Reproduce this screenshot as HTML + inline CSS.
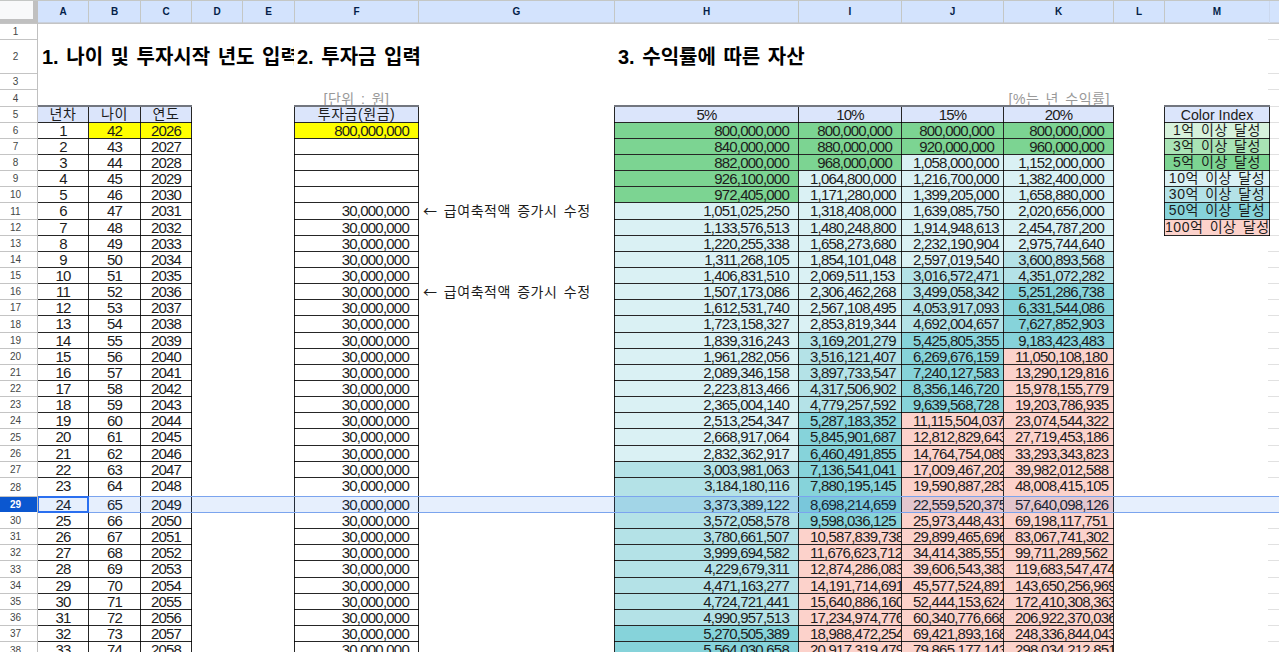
<!DOCTYPE html>
<html lang="ko"><head><meta charset="utf-8"><title>sheet</title>
<style>
html,body{margin:0;padding:0;background:#fff;}
body{width:1279px;height:652px;overflow:hidden;position:relative;
 font-family:"Liberation Sans","Noto Sans CJK KR",sans-serif;color:#000;}
#s{position:absolute;left:0;top:0;width:1279px;height:652px;overflow:hidden;background:#fff;}
#s div{position:absolute;box-sizing:border-box;}
.c{overflow:hidden;white-space:nowrap;font-size:15px;line-height:16px;letter-spacing:-0.78px;color:#1c1c1c;}
.c span{display:inline-block;min-width:100%;box-sizing:border-box;}
.r span{text-align:right;padding-right:9px;padding-left:11px;}
.m span{text-align:center;}
.rn span{text-align:right;}
.k{letter-spacing:0.55px;word-spacing:1.8px;font-size:14px;line-height:14px;}
.c i{font-style:normal;font-family:"Noto Sans CJK KR",sans-serif;}
.vl,.hl{background:rgba(0,0,0,0.85);}
.gl{background:#e1e1e1;}
.ch{background:#d3e3fd;color:#041e49;font-weight:bold;font-size:10px;line-height:22px;text-align:center;top:1px;height:21px;}
.cs{background:#c4c7c5;top:1px;width:1px;height:22px;}
.rh{left:0;width:37px;padding-right:6px;background:#fff;color:#444746;font-size:10px;text-align:center;}
.rs{left:0;width:37px;height:1px;background:#c4c4c4;}
.t{font-size:20px;font-weight:bold;white-space:nowrap;overflow:hidden;line-height:34px;letter-spacing:0;word-spacing:2px;}
.g{color:#999;}
</style></head><body><div id="s">
<div class="gl" style="left:1268px;top:39px;width:11px;height:1px"></div>
<div class="gl" style="left:1268px;top:73px;width:11px;height:1px"></div>
<div class="gl" style="left:1268px;top:89px;width:11px;height:1px"></div>
<div class="gl" style="left:1268px;top:106px;width:11px;height:1px"></div>
<div class="gl" style="left:1268px;top:122px;width:11px;height:1px"></div>
<div class="gl" style="left:1268px;top:138px;width:11px;height:1px"></div>
<div class="gl" style="left:1268px;top:154px;width:11px;height:1px"></div>
<div class="gl" style="left:1268px;top:170px;width:11px;height:1px"></div>
<div class="gl" style="left:1268px;top:186px;width:11px;height:1px"></div>
<div class="gl" style="left:1268px;top:202px;width:11px;height:1px"></div>
<div class="gl" style="left:1268px;top:219px;width:11px;height:1px"></div>
<div class="gl" style="left:1268px;top:235px;width:11px;height:1px"></div>
<div class="gl" style="left:1268px;top:251px;width:11px;height:1px"></div>
<div class="gl" style="left:1268px;top:267px;width:11px;height:1px"></div>
<div class="gl" style="left:1268px;top:283px;width:11px;height:1px"></div>
<div class="gl" style="left:1268px;top:299px;width:11px;height:1px"></div>
<div class="gl" style="left:1268px;top:315px;width:11px;height:1px"></div>
<div class="gl" style="left:1268px;top:332px;width:11px;height:1px"></div>
<div class="gl" style="left:1268px;top:348px;width:11px;height:1px"></div>
<div class="gl" style="left:1268px;top:364px;width:11px;height:1px"></div>
<div class="gl" style="left:1268px;top:380px;width:11px;height:1px"></div>
<div class="gl" style="left:1268px;top:396px;width:11px;height:1px"></div>
<div class="gl" style="left:1268px;top:412px;width:11px;height:1px"></div>
<div class="gl" style="left:1268px;top:428px;width:11px;height:1px"></div>
<div class="gl" style="left:1268px;top:445px;width:11px;height:1px"></div>
<div class="gl" style="left:1268px;top:461px;width:11px;height:1px"></div>
<div class="gl" style="left:1268px;top:477px;width:11px;height:1px"></div>
<div class="gl" style="left:1268px;top:496px;width:11px;height:1px"></div>
<div class="gl" style="left:1268px;top:512px;width:11px;height:1px"></div>
<div class="gl" style="left:1268px;top:528px;width:11px;height:1px"></div>
<div class="gl" style="left:1268px;top:544px;width:11px;height:1px"></div>
<div class="gl" style="left:1268px;top:560px;width:11px;height:1px"></div>
<div class="gl" style="left:1268px;top:577px;width:11px;height:1px"></div>
<div class="gl" style="left:1268px;top:593px;width:11px;height:1px"></div>
<div class="gl" style="left:1268px;top:609px;width:11px;height:1px"></div>
<div class="gl" style="left:1268px;top:625px;width:11px;height:1px"></div>
<div class="gl" style="left:1268px;top:641px;width:11px;height:1px"></div>
<div class="t" style="left:38px;top:40px;width:256px;height:33px;padding-left:4px">1. 나이 및 투자시작 년도 입력</div>
<div class="t" style="left:295px;top:40px;width:200px;height:33px;padding-left:2px">2. 투자금 입력</div>
<div class="t" style="left:615px;top:40px;width:400px;height:33px;padding-left:3px">3. 수익률에 따른 자산</div>
<div class="c m k g" style="left:295px;top:90px;width:123px;height:16px;padding-top:2px;"><span>[단위 : 원]</span></div>
<div class="c rn k g" style="left:1004px;top:90px;width:106px;height:16px;padding-top:2px;"><span>[%는 년 수익률]</span></div>
<div class="c m k" style="left:38px;top:107px;width:50px;height:15px;background:#dbe5fb;"><span>년차</span></div>
<div class="c m k" style="left:89px;top:107px;width:51px;height:15px;background:#dbe5fb;"><span>나이</span></div>
<div class="c m k" style="left:141px;top:107px;width:50px;height:15px;background:#dbe5fb;"><span>연도</span></div>
<div class="c m k" style="left:295px;top:107px;width:123px;height:15px;background:#dbe5fb;"><span>투자금(원금)</span></div>
<div class="c m" style="left:615px;top:107px;width:183px;height:15px;background:#dbe5fb;"><span>5%</span></div>
<div class="c m" style="left:799px;top:107px;width:102px;height:15px;background:#dbe5fb;"><span>10%</span></div>
<div class="c m" style="left:902px;top:107px;width:101px;height:15px;background:#dbe5fb;"><span>15%</span></div>
<div class="c m" style="left:1004px;top:107px;width:109px;height:15px;background:#dbe5fb;"><span>20%</span></div>
<div class="c m" style="left:1165px;top:107px;width:104px;height:15px;background:#dbe5fb;letter-spacing:0;font-size:14.2px;"><span>Color Index</span></div>
<div class="c m k" style="left:1165px;top:123px;width:104px;height:15px;background:#d7f2dc;"><span>1억 이상 달성</span></div>
<div class="c m k" style="left:1165px;top:139px;width:104px;height:15px;background:#a9e3b5;"><span>3억 이상 달성</span></div>
<div class="c m k" style="left:1165px;top:155px;width:104px;height:15px;background:#7cd492;"><span>5억 이상 달성</span></div>
<div class="c m k" style="left:1165px;top:171px;width:104px;height:15px;background:#daf1f4;"><span>10억 이상 달성</span></div>
<div class="c m k" style="left:1165px;top:187px;width:104px;height:15px;background:#b4e2e7;"><span>30억 이상 달성</span></div>
<div class="c m k" style="left:1165px;top:203px;width:104px;height:16px;background:#86d3da;"><span>50억 이상 달성</span></div>
<div class="c m k" style="left:1165px;top:220px;width:104px;height:15px;background:#fcd2cb;"><span>100억 이상 달성</span></div>
<div class="c m" style="left:38px;top:123px;width:50px;height:15px;"><span>1</span></div>
<div class="c m" style="left:89px;top:123px;width:51px;height:15px;background:#ffff00;"><span>42</span></div>
<div class="c m" style="left:141px;top:123px;width:50px;height:15px;background:#ffff00;"><span>2026</span></div>
<div class="c r" style="left:295px;top:123px;width:123px;height:15px;background:#ffff00;"><span>800,000,000</span></div>
<div class="c r" style="left:615px;top:123px;width:183px;height:15px;background:#7cd492;"><span>800,000,000</span></div>
<div class="c r" style="left:799px;top:123px;width:102px;height:15px;background:#7cd492;"><span>800,000,000</span></div>
<div class="c r" style="left:902px;top:123px;width:101px;height:15px;background:#7cd492;"><span>800,000,000</span></div>
<div class="c r" style="left:1004px;top:123px;width:109px;height:15px;background:#7cd492;"><span>800,000,000</span></div>
<div class="c m" style="left:38px;top:139px;width:50px;height:15px;"><span>2</span></div>
<div class="c m" style="left:89px;top:139px;width:51px;height:15px;"><span>43</span></div>
<div class="c m" style="left:141px;top:139px;width:50px;height:15px;"><span>2027</span></div>
<div class="c r" style="left:295px;top:139px;width:123px;height:15px;"><span></span></div>
<div class="c r" style="left:615px;top:139px;width:183px;height:15px;background:#7cd492;"><span>840,000,000</span></div>
<div class="c r" style="left:799px;top:139px;width:102px;height:15px;background:#7cd492;"><span>880,000,000</span></div>
<div class="c r" style="left:902px;top:139px;width:101px;height:15px;background:#7cd492;"><span>920,000,000</span></div>
<div class="c r" style="left:1004px;top:139px;width:109px;height:15px;background:#7cd492;"><span>960,000,000</span></div>
<div class="c m" style="left:38px;top:155px;width:50px;height:15px;"><span>3</span></div>
<div class="c m" style="left:89px;top:155px;width:51px;height:15px;"><span>44</span></div>
<div class="c m" style="left:141px;top:155px;width:50px;height:15px;"><span>2028</span></div>
<div class="c r" style="left:295px;top:155px;width:123px;height:15px;"><span></span></div>
<div class="c r" style="left:615px;top:155px;width:183px;height:15px;background:#7cd492;"><span>882,000,000</span></div>
<div class="c r" style="left:799px;top:155px;width:102px;height:15px;background:#7cd492;"><span>968,000,000</span></div>
<div class="c r" style="left:902px;top:155px;width:101px;height:15px;background:#daf1f4;"><span>1,058,000,000</span></div>
<div class="c r" style="left:1004px;top:155px;width:109px;height:15px;background:#daf1f4;"><span>1,152,000,000</span></div>
<div class="c m" style="left:38px;top:171px;width:50px;height:15px;"><span>4</span></div>
<div class="c m" style="left:89px;top:171px;width:51px;height:15px;"><span>45</span></div>
<div class="c m" style="left:141px;top:171px;width:50px;height:15px;"><span>2029</span></div>
<div class="c r" style="left:295px;top:171px;width:123px;height:15px;"><span></span></div>
<div class="c r" style="left:615px;top:171px;width:183px;height:15px;background:#7cd492;"><span>926,100,000</span></div>
<div class="c r" style="left:799px;top:171px;width:102px;height:15px;background:#daf1f4;"><span>1,064,800,000</span></div>
<div class="c r" style="left:902px;top:171px;width:101px;height:15px;background:#daf1f4;"><span>1,216,700,000</span></div>
<div class="c r" style="left:1004px;top:171px;width:109px;height:15px;background:#daf1f4;"><span>1,382,400,000</span></div>
<div class="c m" style="left:38px;top:187px;width:50px;height:15px;"><span>5</span></div>
<div class="c m" style="left:89px;top:187px;width:51px;height:15px;"><span>46</span></div>
<div class="c m" style="left:141px;top:187px;width:50px;height:15px;"><span>2030</span></div>
<div class="c r" style="left:295px;top:187px;width:123px;height:15px;"><span></span></div>
<div class="c r" style="left:615px;top:187px;width:183px;height:15px;background:#7cd492;"><span>972,405,000</span></div>
<div class="c r" style="left:799px;top:187px;width:102px;height:15px;background:#daf1f4;"><span>1,171,280,000</span></div>
<div class="c r" style="left:902px;top:187px;width:101px;height:15px;background:#daf1f4;"><span>1,399,205,000</span></div>
<div class="c r" style="left:1004px;top:187px;width:109px;height:15px;background:#daf1f4;"><span>1,658,880,000</span></div>
<div class="c m" style="left:38px;top:203px;width:50px;height:16px;"><span>6</span></div>
<div class="c m" style="left:89px;top:203px;width:51px;height:16px;"><span>47</span></div>
<div class="c m" style="left:141px;top:203px;width:50px;height:16px;"><span>2031</span></div>
<div class="c r" style="left:295px;top:203px;width:123px;height:16px;"><span>30,000,000</span></div>
<div class="c r" style="left:615px;top:203px;width:183px;height:16px;background:#daf1f4;"><span>1,051,025,250</span></div>
<div class="c r" style="left:799px;top:203px;width:102px;height:16px;background:#daf1f4;"><span>1,318,408,000</span></div>
<div class="c r" style="left:902px;top:203px;width:101px;height:16px;background:#daf1f4;"><span>1,639,085,750</span></div>
<div class="c r" style="left:1004px;top:203px;width:109px;height:16px;background:#daf1f4;"><span>2,020,656,000</span></div>
<div class="c k" style="left:419px;top:203px;width:195px;height:16px;padding-left:4px;"><span><i>←</i> 급여축적액 증가시 수정</span></div>
<div class="c m" style="left:38px;top:220px;width:50px;height:15px;"><span>7</span></div>
<div class="c m" style="left:89px;top:220px;width:51px;height:15px;"><span>48</span></div>
<div class="c m" style="left:141px;top:220px;width:50px;height:15px;"><span>2032</span></div>
<div class="c r" style="left:295px;top:220px;width:123px;height:15px;"><span>30,000,000</span></div>
<div class="c r" style="left:615px;top:220px;width:183px;height:15px;background:#daf1f4;"><span>1,133,576,513</span></div>
<div class="c r" style="left:799px;top:220px;width:102px;height:15px;background:#daf1f4;"><span>1,480,248,800</span></div>
<div class="c r" style="left:902px;top:220px;width:101px;height:15px;background:#daf1f4;"><span>1,914,948,613</span></div>
<div class="c r" style="left:1004px;top:220px;width:109px;height:15px;background:#daf1f4;"><span>2,454,787,200</span></div>
<div class="c m" style="left:38px;top:236px;width:50px;height:15px;"><span>8</span></div>
<div class="c m" style="left:89px;top:236px;width:51px;height:15px;"><span>49</span></div>
<div class="c m" style="left:141px;top:236px;width:50px;height:15px;"><span>2033</span></div>
<div class="c r" style="left:295px;top:236px;width:123px;height:15px;"><span>30,000,000</span></div>
<div class="c r" style="left:615px;top:236px;width:183px;height:15px;background:#daf1f4;"><span>1,220,255,338</span></div>
<div class="c r" style="left:799px;top:236px;width:102px;height:15px;background:#daf1f4;"><span>1,658,273,680</span></div>
<div class="c r" style="left:902px;top:236px;width:101px;height:15px;background:#daf1f4;"><span>2,232,190,904</span></div>
<div class="c r" style="left:1004px;top:236px;width:109px;height:15px;background:#daf1f4;"><span>2,975,744,640</span></div>
<div class="c m" style="left:38px;top:252px;width:50px;height:15px;"><span>9</span></div>
<div class="c m" style="left:89px;top:252px;width:51px;height:15px;"><span>50</span></div>
<div class="c m" style="left:141px;top:252px;width:50px;height:15px;"><span>2034</span></div>
<div class="c r" style="left:295px;top:252px;width:123px;height:15px;"><span>30,000,000</span></div>
<div class="c r" style="left:615px;top:252px;width:183px;height:15px;background:#daf1f4;"><span>1,311,268,105</span></div>
<div class="c r" style="left:799px;top:252px;width:102px;height:15px;background:#daf1f4;"><span>1,854,101,048</span></div>
<div class="c r" style="left:902px;top:252px;width:101px;height:15px;background:#daf1f4;"><span>2,597,019,540</span></div>
<div class="c r" style="left:1004px;top:252px;width:109px;height:15px;background:#b4e2e7;"><span>3,600,893,568</span></div>
<div class="c m" style="left:38px;top:268px;width:50px;height:15px;"><span>10</span></div>
<div class="c m" style="left:89px;top:268px;width:51px;height:15px;"><span>51</span></div>
<div class="c m" style="left:141px;top:268px;width:50px;height:15px;"><span>2035</span></div>
<div class="c r" style="left:295px;top:268px;width:123px;height:15px;"><span>30,000,000</span></div>
<div class="c r" style="left:615px;top:268px;width:183px;height:15px;background:#daf1f4;"><span>1,406,831,510</span></div>
<div class="c r" style="left:799px;top:268px;width:102px;height:15px;background:#daf1f4;"><span>2,069,511,153</span></div>
<div class="c r" style="left:902px;top:268px;width:101px;height:15px;background:#b4e2e7;"><span>3,016,572,471</span></div>
<div class="c r" style="left:1004px;top:268px;width:109px;height:15px;background:#b4e2e7;"><span>4,351,072,282</span></div>
<div class="c m" style="left:38px;top:284px;width:50px;height:15px;"><span>11</span></div>
<div class="c m" style="left:89px;top:284px;width:51px;height:15px;"><span>52</span></div>
<div class="c m" style="left:141px;top:284px;width:50px;height:15px;"><span>2036</span></div>
<div class="c r" style="left:295px;top:284px;width:123px;height:15px;"><span>30,000,000</span></div>
<div class="c r" style="left:615px;top:284px;width:183px;height:15px;background:#daf1f4;"><span>1,507,173,086</span></div>
<div class="c r" style="left:799px;top:284px;width:102px;height:15px;background:#daf1f4;"><span>2,306,462,268</span></div>
<div class="c r" style="left:902px;top:284px;width:101px;height:15px;background:#b4e2e7;"><span>3,499,058,342</span></div>
<div class="c r" style="left:1004px;top:284px;width:109px;height:15px;background:#86d3da;"><span>5,251,286,738</span></div>
<div class="c k" style="left:419px;top:284px;width:195px;height:15px;padding-left:4px;"><span><i>←</i> 급여축적액 증가시 수정</span></div>
<div class="c m" style="left:38px;top:300px;width:50px;height:15px;"><span>12</span></div>
<div class="c m" style="left:89px;top:300px;width:51px;height:15px;"><span>53</span></div>
<div class="c m" style="left:141px;top:300px;width:50px;height:15px;"><span>2037</span></div>
<div class="c r" style="left:295px;top:300px;width:123px;height:15px;"><span>30,000,000</span></div>
<div class="c r" style="left:615px;top:300px;width:183px;height:15px;background:#daf1f4;"><span>1,612,531,740</span></div>
<div class="c r" style="left:799px;top:300px;width:102px;height:15px;background:#daf1f4;"><span>2,567,108,495</span></div>
<div class="c r" style="left:902px;top:300px;width:101px;height:15px;background:#b4e2e7;"><span>4,053,917,093</span></div>
<div class="c r" style="left:1004px;top:300px;width:109px;height:15px;background:#86d3da;"><span>6,331,544,086</span></div>
<div class="c m" style="left:38px;top:316px;width:50px;height:16px;"><span>13</span></div>
<div class="c m" style="left:89px;top:316px;width:51px;height:16px;"><span>54</span></div>
<div class="c m" style="left:141px;top:316px;width:50px;height:16px;"><span>2038</span></div>
<div class="c r" style="left:295px;top:316px;width:123px;height:16px;"><span>30,000,000</span></div>
<div class="c r" style="left:615px;top:316px;width:183px;height:16px;background:#daf1f4;"><span>1,723,158,327</span></div>
<div class="c r" style="left:799px;top:316px;width:102px;height:16px;background:#daf1f4;"><span>2,853,819,344</span></div>
<div class="c r" style="left:902px;top:316px;width:101px;height:16px;background:#b4e2e7;"><span>4,692,004,657</span></div>
<div class="c r" style="left:1004px;top:316px;width:109px;height:16px;background:#86d3da;"><span>7,627,852,903</span></div>
<div class="c m" style="left:38px;top:333px;width:50px;height:15px;"><span>14</span></div>
<div class="c m" style="left:89px;top:333px;width:51px;height:15px;"><span>55</span></div>
<div class="c m" style="left:141px;top:333px;width:50px;height:15px;"><span>2039</span></div>
<div class="c r" style="left:295px;top:333px;width:123px;height:15px;"><span>30,000,000</span></div>
<div class="c r" style="left:615px;top:333px;width:183px;height:15px;background:#daf1f4;"><span>1,839,316,243</span></div>
<div class="c r" style="left:799px;top:333px;width:102px;height:15px;background:#b4e2e7;"><span>3,169,201,279</span></div>
<div class="c r" style="left:902px;top:333px;width:101px;height:15px;background:#86d3da;"><span>5,425,805,355</span></div>
<div class="c r" style="left:1004px;top:333px;width:109px;height:15px;background:#86d3da;"><span>9,183,423,483</span></div>
<div class="c m" style="left:38px;top:349px;width:50px;height:15px;"><span>15</span></div>
<div class="c m" style="left:89px;top:349px;width:51px;height:15px;"><span>56</span></div>
<div class="c m" style="left:141px;top:349px;width:50px;height:15px;"><span>2040</span></div>
<div class="c r" style="left:295px;top:349px;width:123px;height:15px;"><span>30,000,000</span></div>
<div class="c r" style="left:615px;top:349px;width:183px;height:15px;background:#daf1f4;"><span>1,961,282,056</span></div>
<div class="c r" style="left:799px;top:349px;width:102px;height:15px;background:#b4e2e7;"><span>3,516,121,407</span></div>
<div class="c r" style="left:902px;top:349px;width:101px;height:15px;background:#86d3da;"><span>6,269,676,159</span></div>
<div class="c r" style="left:1004px;top:349px;width:109px;height:15px;background:#fcd2cb;"><span>11,050,108,180</span></div>
<div class="c m" style="left:38px;top:365px;width:50px;height:15px;"><span>16</span></div>
<div class="c m" style="left:89px;top:365px;width:51px;height:15px;"><span>57</span></div>
<div class="c m" style="left:141px;top:365px;width:50px;height:15px;"><span>2041</span></div>
<div class="c r" style="left:295px;top:365px;width:123px;height:15px;"><span>30,000,000</span></div>
<div class="c r" style="left:615px;top:365px;width:183px;height:15px;background:#daf1f4;"><span>2,089,346,158</span></div>
<div class="c r" style="left:799px;top:365px;width:102px;height:15px;background:#b4e2e7;"><span>3,897,733,547</span></div>
<div class="c r" style="left:902px;top:365px;width:101px;height:15px;background:#86d3da;"><span>7,240,127,583</span></div>
<div class="c r" style="left:1004px;top:365px;width:109px;height:15px;background:#fcd2cb;"><span>13,290,129,816</span></div>
<div class="c m" style="left:38px;top:381px;width:50px;height:15px;"><span>17</span></div>
<div class="c m" style="left:89px;top:381px;width:51px;height:15px;"><span>58</span></div>
<div class="c m" style="left:141px;top:381px;width:50px;height:15px;"><span>2042</span></div>
<div class="c r" style="left:295px;top:381px;width:123px;height:15px;"><span>30,000,000</span></div>
<div class="c r" style="left:615px;top:381px;width:183px;height:15px;background:#daf1f4;"><span>2,223,813,466</span></div>
<div class="c r" style="left:799px;top:381px;width:102px;height:15px;background:#b4e2e7;"><span>4,317,506,902</span></div>
<div class="c r" style="left:902px;top:381px;width:101px;height:15px;background:#86d3da;"><span>8,356,146,720</span></div>
<div class="c r" style="left:1004px;top:381px;width:109px;height:15px;background:#fcd2cb;"><span>15,978,155,779</span></div>
<div class="c m" style="left:38px;top:397px;width:50px;height:15px;"><span>18</span></div>
<div class="c m" style="left:89px;top:397px;width:51px;height:15px;"><span>59</span></div>
<div class="c m" style="left:141px;top:397px;width:50px;height:15px;"><span>2043</span></div>
<div class="c r" style="left:295px;top:397px;width:123px;height:15px;"><span>30,000,000</span></div>
<div class="c r" style="left:615px;top:397px;width:183px;height:15px;background:#daf1f4;"><span>2,365,004,140</span></div>
<div class="c r" style="left:799px;top:397px;width:102px;height:15px;background:#b4e2e7;"><span>4,779,257,592</span></div>
<div class="c r" style="left:902px;top:397px;width:101px;height:15px;background:#86d3da;"><span>9,639,568,728</span></div>
<div class="c r" style="left:1004px;top:397px;width:109px;height:15px;background:#fcd2cb;"><span>19,203,786,935</span></div>
<div class="c m" style="left:38px;top:413px;width:50px;height:15px;"><span>19</span></div>
<div class="c m" style="left:89px;top:413px;width:51px;height:15px;"><span>60</span></div>
<div class="c m" style="left:141px;top:413px;width:50px;height:15px;"><span>2044</span></div>
<div class="c r" style="left:295px;top:413px;width:123px;height:15px;"><span>30,000,000</span></div>
<div class="c r" style="left:615px;top:413px;width:183px;height:15px;background:#daf1f4;"><span>2,513,254,347</span></div>
<div class="c r" style="left:799px;top:413px;width:102px;height:15px;background:#86d3da;"><span>5,287,183,352</span></div>
<div class="c r" style="left:902px;top:413px;width:101px;height:15px;background:#fcd2cb;"><span>11,115,504,037</span></div>
<div class="c r" style="left:1004px;top:413px;width:109px;height:15px;background:#fcd2cb;"><span>23,074,544,322</span></div>
<div class="c m" style="left:38px;top:429px;width:50px;height:16px;"><span>20</span></div>
<div class="c m" style="left:89px;top:429px;width:51px;height:16px;"><span>61</span></div>
<div class="c m" style="left:141px;top:429px;width:50px;height:16px;"><span>2045</span></div>
<div class="c r" style="left:295px;top:429px;width:123px;height:16px;"><span>30,000,000</span></div>
<div class="c r" style="left:615px;top:429px;width:183px;height:16px;background:#daf1f4;"><span>2,668,917,064</span></div>
<div class="c r" style="left:799px;top:429px;width:102px;height:16px;background:#86d3da;"><span>5,845,901,687</span></div>
<div class="c r" style="left:902px;top:429px;width:101px;height:16px;background:#fcd2cb;"><span>12,812,829,643</span></div>
<div class="c r" style="left:1004px;top:429px;width:109px;height:16px;background:#fcd2cb;"><span>27,719,453,186</span></div>
<div class="c m" style="left:38px;top:446px;width:50px;height:15px;"><span>21</span></div>
<div class="c m" style="left:89px;top:446px;width:51px;height:15px;"><span>62</span></div>
<div class="c m" style="left:141px;top:446px;width:50px;height:15px;"><span>2046</span></div>
<div class="c r" style="left:295px;top:446px;width:123px;height:15px;"><span>30,000,000</span></div>
<div class="c r" style="left:615px;top:446px;width:183px;height:15px;background:#daf1f4;"><span>2,832,362,917</span></div>
<div class="c r" style="left:799px;top:446px;width:102px;height:15px;background:#86d3da;"><span>6,460,491,855</span></div>
<div class="c r" style="left:902px;top:446px;width:101px;height:15px;background:#fcd2cb;"><span>14,764,754,089</span></div>
<div class="c r" style="left:1004px;top:446px;width:109px;height:15px;background:#fcd2cb;"><span>33,293,343,823</span></div>
<div class="c m" style="left:38px;top:462px;width:50px;height:15px;"><span>22</span></div>
<div class="c m" style="left:89px;top:462px;width:51px;height:15px;"><span>63</span></div>
<div class="c m" style="left:141px;top:462px;width:50px;height:15px;"><span>2047</span></div>
<div class="c r" style="left:295px;top:462px;width:123px;height:15px;"><span>30,000,000</span></div>
<div class="c r" style="left:615px;top:462px;width:183px;height:15px;background:#b4e2e7;"><span>3,003,981,063</span></div>
<div class="c r" style="left:799px;top:462px;width:102px;height:15px;background:#86d3da;"><span>7,136,541,041</span></div>
<div class="c r" style="left:902px;top:462px;width:101px;height:15px;background:#fcd2cb;"><span>17,009,467,202</span></div>
<div class="c r" style="left:1004px;top:462px;width:109px;height:15px;background:#fcd2cb;"><span>39,982,012,588</span></div>
<div class="c m" style="left:38px;top:478px;width:50px;height:18px;"><span>23</span></div>
<div class="c m" style="left:89px;top:478px;width:51px;height:18px;"><span>64</span></div>
<div class="c m" style="left:141px;top:478px;width:50px;height:18px;"><span>2048</span></div>
<div class="c r" style="left:295px;top:478px;width:123px;height:18px;"><span>30,000,000</span></div>
<div class="c r" style="left:615px;top:478px;width:183px;height:18px;background:#b4e2e7;"><span>3,184,180,116</span></div>
<div class="c r" style="left:799px;top:478px;width:102px;height:18px;background:#86d3da;"><span>7,880,195,145</span></div>
<div class="c r" style="left:902px;top:478px;width:101px;height:18px;background:#fcd2cb;"><span>19,590,887,283</span></div>
<div class="c r" style="left:1004px;top:478px;width:109px;height:18px;background:#fcd2cb;"><span>48,008,415,105</span></div>
<div class="c m" style="left:38px;top:497px;width:50px;height:15px;"><span>24</span></div>
<div class="c m" style="left:89px;top:497px;width:51px;height:15px;"><span>65</span></div>
<div class="c m" style="left:141px;top:497px;width:50px;height:15px;"><span>2049</span></div>
<div class="c r" style="left:295px;top:497px;width:123px;height:15px;"><span>30,000,000</span></div>
<div class="c r" style="left:615px;top:497px;width:183px;height:15px;background:#b4e2e7;"><span>3,373,389,122</span></div>
<div class="c r" style="left:799px;top:497px;width:102px;height:15px;background:#86d3da;"><span>8,698,214,659</span></div>
<div class="c r" style="left:902px;top:497px;width:101px;height:15px;background:#fcd2cb;"><span>22,559,520,375</span></div>
<div class="c r" style="left:1004px;top:497px;width:109px;height:15px;background:#fcd2cb;"><span>57,640,098,126</span></div>
<div class="c m" style="left:38px;top:513px;width:50px;height:15px;"><span>25</span></div>
<div class="c m" style="left:89px;top:513px;width:51px;height:15px;"><span>66</span></div>
<div class="c m" style="left:141px;top:513px;width:50px;height:15px;"><span>2050</span></div>
<div class="c r" style="left:295px;top:513px;width:123px;height:15px;"><span>30,000,000</span></div>
<div class="c r" style="left:615px;top:513px;width:183px;height:15px;background:#b4e2e7;"><span>3,572,058,578</span></div>
<div class="c r" style="left:799px;top:513px;width:102px;height:15px;background:#86d3da;"><span>9,598,036,125</span></div>
<div class="c r" style="left:902px;top:513px;width:101px;height:15px;background:#fcd2cb;"><span>25,973,448,431</span></div>
<div class="c r" style="left:1004px;top:513px;width:109px;height:15px;background:#fcd2cb;"><span>69,198,117,751</span></div>
<div class="c m" style="left:38px;top:529px;width:50px;height:15px;"><span>26</span></div>
<div class="c m" style="left:89px;top:529px;width:51px;height:15px;"><span>67</span></div>
<div class="c m" style="left:141px;top:529px;width:50px;height:15px;"><span>2051</span></div>
<div class="c r" style="left:295px;top:529px;width:123px;height:15px;"><span>30,000,000</span></div>
<div class="c r" style="left:615px;top:529px;width:183px;height:15px;background:#b4e2e7;"><span>3,780,661,507</span></div>
<div class="c r" style="left:799px;top:529px;width:102px;height:15px;background:#fcd2cb;"><span>10,587,839,738</span></div>
<div class="c r" style="left:902px;top:529px;width:101px;height:15px;background:#fcd2cb;"><span>29,899,465,696</span></div>
<div class="c r" style="left:1004px;top:529px;width:109px;height:15px;background:#fcd2cb;"><span>83,067,741,302</span></div>
<div class="c m" style="left:38px;top:545px;width:50px;height:15px;"><span>27</span></div>
<div class="c m" style="left:89px;top:545px;width:51px;height:15px;"><span>68</span></div>
<div class="c m" style="left:141px;top:545px;width:50px;height:15px;"><span>2052</span></div>
<div class="c r" style="left:295px;top:545px;width:123px;height:15px;"><span>30,000,000</span></div>
<div class="c r" style="left:615px;top:545px;width:183px;height:15px;background:#b4e2e7;"><span>3,999,694,582</span></div>
<div class="c r" style="left:799px;top:545px;width:102px;height:15px;background:#fcd2cb;"><span>11,676,623,712</span></div>
<div class="c r" style="left:902px;top:545px;width:101px;height:15px;background:#fcd2cb;"><span>34,414,385,551</span></div>
<div class="c r" style="left:1004px;top:545px;width:109px;height:15px;background:#fcd2cb;"><span>99,711,289,562</span></div>
<div class="c m" style="left:38px;top:561px;width:50px;height:16px;"><span>28</span></div>
<div class="c m" style="left:89px;top:561px;width:51px;height:16px;"><span>69</span></div>
<div class="c m" style="left:141px;top:561px;width:50px;height:16px;"><span>2053</span></div>
<div class="c r" style="left:295px;top:561px;width:123px;height:16px;"><span>30,000,000</span></div>
<div class="c r" style="left:615px;top:561px;width:183px;height:16px;background:#b4e2e7;"><span>4,229,679,311</span></div>
<div class="c r" style="left:799px;top:561px;width:102px;height:16px;background:#fcd2cb;"><span>12,874,286,083</span></div>
<div class="c r" style="left:902px;top:561px;width:101px;height:16px;background:#fcd2cb;"><span>39,606,543,383</span></div>
<div class="c r" style="left:1004px;top:561px;width:109px;height:16px;background:#fcd2cb;"><span>119,683,547,474</span></div>
<div class="c m" style="left:38px;top:578px;width:50px;height:15px;"><span>29</span></div>
<div class="c m" style="left:89px;top:578px;width:51px;height:15px;"><span>70</span></div>
<div class="c m" style="left:141px;top:578px;width:50px;height:15px;"><span>2054</span></div>
<div class="c r" style="left:295px;top:578px;width:123px;height:15px;"><span>30,000,000</span></div>
<div class="c r" style="left:615px;top:578px;width:183px;height:15px;background:#b4e2e7;"><span>4,471,163,277</span></div>
<div class="c r" style="left:799px;top:578px;width:102px;height:15px;background:#fcd2cb;"><span>14,191,714,691</span></div>
<div class="c r" style="left:902px;top:578px;width:101px;height:15px;background:#fcd2cb;"><span>45,577,524,891</span></div>
<div class="c r" style="left:1004px;top:578px;width:109px;height:15px;background:#fcd2cb;"><span>143,650,256,969</span></div>
<div class="c m" style="left:38px;top:594px;width:50px;height:15px;"><span>30</span></div>
<div class="c m" style="left:89px;top:594px;width:51px;height:15px;"><span>71</span></div>
<div class="c m" style="left:141px;top:594px;width:50px;height:15px;"><span>2055</span></div>
<div class="c r" style="left:295px;top:594px;width:123px;height:15px;"><span>30,000,000</span></div>
<div class="c r" style="left:615px;top:594px;width:183px;height:15px;background:#b4e2e7;"><span>4,724,721,441</span></div>
<div class="c r" style="left:799px;top:594px;width:102px;height:15px;background:#fcd2cb;"><span>15,640,886,160</span></div>
<div class="c r" style="left:902px;top:594px;width:101px;height:15px;background:#fcd2cb;"><span>52,444,153,624</span></div>
<div class="c r" style="left:1004px;top:594px;width:109px;height:15px;background:#fcd2cb;"><span>172,410,308,363</span></div>
<div class="c m" style="left:38px;top:610px;width:50px;height:15px;"><span>31</span></div>
<div class="c m" style="left:89px;top:610px;width:51px;height:15px;"><span>72</span></div>
<div class="c m" style="left:141px;top:610px;width:50px;height:15px;"><span>2056</span></div>
<div class="c r" style="left:295px;top:610px;width:123px;height:15px;"><span>30,000,000</span></div>
<div class="c r" style="left:615px;top:610px;width:183px;height:15px;background:#b4e2e7;"><span>4,990,957,513</span></div>
<div class="c r" style="left:799px;top:610px;width:102px;height:15px;background:#fcd2cb;"><span>17,234,974,776</span></div>
<div class="c r" style="left:902px;top:610px;width:101px;height:15px;background:#fcd2cb;"><span>60,340,776,668</span></div>
<div class="c r" style="left:1004px;top:610px;width:109px;height:15px;background:#fcd2cb;"><span>206,922,370,036</span></div>
<div class="c m" style="left:38px;top:626px;width:50px;height:15px;"><span>32</span></div>
<div class="c m" style="left:89px;top:626px;width:51px;height:15px;"><span>73</span></div>
<div class="c m" style="left:141px;top:626px;width:50px;height:15px;"><span>2057</span></div>
<div class="c r" style="left:295px;top:626px;width:123px;height:15px;"><span>30,000,000</span></div>
<div class="c r" style="left:615px;top:626px;width:183px;height:15px;background:#86d3da;"><span>5,270,505,389</span></div>
<div class="c r" style="left:799px;top:626px;width:102px;height:15px;background:#fcd2cb;"><span>18,988,472,254</span></div>
<div class="c r" style="left:902px;top:626px;width:101px;height:15px;background:#fcd2cb;"><span>69,421,893,168</span></div>
<div class="c r" style="left:1004px;top:626px;width:109px;height:15px;background:#fcd2cb;"><span>248,336,844,043</span></div>
<div class="c m" style="left:38px;top:642px;width:50px;height:16px;"><span>33</span></div>
<div class="c m" style="left:89px;top:642px;width:51px;height:16px;"><span>74</span></div>
<div class="c m" style="left:141px;top:642px;width:50px;height:16px;"><span>2058</span></div>
<div class="c r" style="left:295px;top:642px;width:123px;height:16px;"><span>30,000,000</span></div>
<div class="c r" style="left:615px;top:642px;width:183px;height:16px;background:#86d3da;"><span>5,564,030,658</span></div>
<div class="c r" style="left:799px;top:642px;width:102px;height:16px;background:#fcd2cb;"><span>20,917,319,479</span></div>
<div class="c r" style="left:902px;top:642px;width:101px;height:16px;background:#fcd2cb;"><span>79,865,177,143</span></div>
<div class="c r" style="left:1004px;top:642px;width:109px;height:16px;background:#fcd2cb;"><span>298,034,212,851</span></div>
<div class="hl" style="left:38px;top:106px;width:154px;height:1px"></div>
<div class="hl" style="left:294px;top:106px;width:125px;height:1px"></div>
<div class="hl" style="left:614px;top:106px;width:500px;height:1px"></div>
<div class="hl" style="left:38px;top:122px;width:154px;height:1px"></div>
<div class="hl" style="left:294px;top:122px;width:125px;height:1px"></div>
<div class="hl" style="left:614px;top:122px;width:500px;height:1px"></div>
<div class="hl" style="left:38px;top:138px;width:154px;height:1px"></div>
<div class="hl" style="left:294px;top:138px;width:125px;height:1px"></div>
<div class="hl" style="left:614px;top:138px;width:500px;height:1px"></div>
<div class="hl" style="left:38px;top:154px;width:154px;height:1px"></div>
<div class="hl" style="left:294px;top:154px;width:125px;height:1px"></div>
<div class="hl" style="left:614px;top:154px;width:500px;height:1px"></div>
<div class="hl" style="left:38px;top:170px;width:154px;height:1px"></div>
<div class="hl" style="left:294px;top:170px;width:125px;height:1px"></div>
<div class="hl" style="left:614px;top:170px;width:500px;height:1px"></div>
<div class="hl" style="left:38px;top:186px;width:154px;height:1px"></div>
<div class="hl" style="left:294px;top:186px;width:125px;height:1px"></div>
<div class="hl" style="left:614px;top:186px;width:500px;height:1px"></div>
<div class="hl" style="left:38px;top:202px;width:154px;height:1px"></div>
<div class="hl" style="left:294px;top:202px;width:125px;height:1px"></div>
<div class="hl" style="left:614px;top:202px;width:500px;height:1px"></div>
<div class="hl" style="left:38px;top:219px;width:154px;height:1px"></div>
<div class="hl" style="left:294px;top:219px;width:125px;height:1px"></div>
<div class="hl" style="left:614px;top:219px;width:500px;height:1px"></div>
<div class="hl" style="left:38px;top:235px;width:154px;height:1px"></div>
<div class="hl" style="left:294px;top:235px;width:125px;height:1px"></div>
<div class="hl" style="left:614px;top:235px;width:500px;height:1px"></div>
<div class="hl" style="left:38px;top:251px;width:154px;height:1px"></div>
<div class="hl" style="left:294px;top:251px;width:125px;height:1px"></div>
<div class="hl" style="left:614px;top:251px;width:500px;height:1px"></div>
<div class="hl" style="left:38px;top:267px;width:154px;height:1px"></div>
<div class="hl" style="left:294px;top:267px;width:125px;height:1px"></div>
<div class="hl" style="left:614px;top:267px;width:500px;height:1px"></div>
<div class="hl" style="left:38px;top:283px;width:154px;height:1px"></div>
<div class="hl" style="left:294px;top:283px;width:125px;height:1px"></div>
<div class="hl" style="left:614px;top:283px;width:500px;height:1px"></div>
<div class="hl" style="left:38px;top:299px;width:154px;height:1px"></div>
<div class="hl" style="left:294px;top:299px;width:125px;height:1px"></div>
<div class="hl" style="left:614px;top:299px;width:500px;height:1px"></div>
<div class="hl" style="left:38px;top:315px;width:154px;height:1px"></div>
<div class="hl" style="left:294px;top:315px;width:125px;height:1px"></div>
<div class="hl" style="left:614px;top:315px;width:500px;height:1px"></div>
<div class="hl" style="left:38px;top:332px;width:154px;height:1px"></div>
<div class="hl" style="left:294px;top:332px;width:125px;height:1px"></div>
<div class="hl" style="left:614px;top:332px;width:500px;height:1px"></div>
<div class="hl" style="left:38px;top:348px;width:154px;height:1px"></div>
<div class="hl" style="left:294px;top:348px;width:125px;height:1px"></div>
<div class="hl" style="left:614px;top:348px;width:500px;height:1px"></div>
<div class="hl" style="left:38px;top:364px;width:154px;height:1px"></div>
<div class="hl" style="left:294px;top:364px;width:125px;height:1px"></div>
<div class="hl" style="left:614px;top:364px;width:500px;height:1px"></div>
<div class="hl" style="left:38px;top:380px;width:154px;height:1px"></div>
<div class="hl" style="left:294px;top:380px;width:125px;height:1px"></div>
<div class="hl" style="left:614px;top:380px;width:500px;height:1px"></div>
<div class="hl" style="left:38px;top:396px;width:154px;height:1px"></div>
<div class="hl" style="left:294px;top:396px;width:125px;height:1px"></div>
<div class="hl" style="left:614px;top:396px;width:500px;height:1px"></div>
<div class="hl" style="left:38px;top:412px;width:154px;height:1px"></div>
<div class="hl" style="left:294px;top:412px;width:125px;height:1px"></div>
<div class="hl" style="left:614px;top:412px;width:500px;height:1px"></div>
<div class="hl" style="left:38px;top:428px;width:154px;height:1px"></div>
<div class="hl" style="left:294px;top:428px;width:125px;height:1px"></div>
<div class="hl" style="left:614px;top:428px;width:500px;height:1px"></div>
<div class="hl" style="left:38px;top:445px;width:154px;height:1px"></div>
<div class="hl" style="left:294px;top:445px;width:125px;height:1px"></div>
<div class="hl" style="left:614px;top:445px;width:500px;height:1px"></div>
<div class="hl" style="left:38px;top:461px;width:154px;height:1px"></div>
<div class="hl" style="left:294px;top:461px;width:125px;height:1px"></div>
<div class="hl" style="left:614px;top:461px;width:500px;height:1px"></div>
<div class="hl" style="left:38px;top:477px;width:154px;height:1px"></div>
<div class="hl" style="left:294px;top:477px;width:125px;height:1px"></div>
<div class="hl" style="left:614px;top:477px;width:500px;height:1px"></div>
<div class="hl" style="left:38px;top:496px;width:154px;height:1px"></div>
<div class="hl" style="left:294px;top:496px;width:125px;height:1px"></div>
<div class="hl" style="left:614px;top:496px;width:500px;height:1px"></div>
<div class="hl" style="left:38px;top:512px;width:154px;height:1px"></div>
<div class="hl" style="left:294px;top:512px;width:125px;height:1px"></div>
<div class="hl" style="left:614px;top:512px;width:500px;height:1px"></div>
<div class="hl" style="left:38px;top:528px;width:154px;height:1px"></div>
<div class="hl" style="left:294px;top:528px;width:125px;height:1px"></div>
<div class="hl" style="left:614px;top:528px;width:500px;height:1px"></div>
<div class="hl" style="left:38px;top:544px;width:154px;height:1px"></div>
<div class="hl" style="left:294px;top:544px;width:125px;height:1px"></div>
<div class="hl" style="left:614px;top:544px;width:500px;height:1px"></div>
<div class="hl" style="left:38px;top:560px;width:154px;height:1px"></div>
<div class="hl" style="left:294px;top:560px;width:125px;height:1px"></div>
<div class="hl" style="left:614px;top:560px;width:500px;height:1px"></div>
<div class="hl" style="left:38px;top:577px;width:154px;height:1px"></div>
<div class="hl" style="left:294px;top:577px;width:125px;height:1px"></div>
<div class="hl" style="left:614px;top:577px;width:500px;height:1px"></div>
<div class="hl" style="left:38px;top:593px;width:154px;height:1px"></div>
<div class="hl" style="left:294px;top:593px;width:125px;height:1px"></div>
<div class="hl" style="left:614px;top:593px;width:500px;height:1px"></div>
<div class="hl" style="left:38px;top:609px;width:154px;height:1px"></div>
<div class="hl" style="left:294px;top:609px;width:125px;height:1px"></div>
<div class="hl" style="left:614px;top:609px;width:500px;height:1px"></div>
<div class="hl" style="left:38px;top:625px;width:154px;height:1px"></div>
<div class="hl" style="left:294px;top:625px;width:125px;height:1px"></div>
<div class="hl" style="left:614px;top:625px;width:500px;height:1px"></div>
<div class="hl" style="left:38px;top:641px;width:154px;height:1px"></div>
<div class="hl" style="left:294px;top:641px;width:125px;height:1px"></div>
<div class="hl" style="left:614px;top:641px;width:500px;height:1px"></div>
<div class="hl" style="left:1164px;top:106px;width:106px;height:1px"></div>
<div class="hl" style="left:1164px;top:122px;width:106px;height:1px"></div>
<div class="hl" style="left:1164px;top:138px;width:106px;height:1px"></div>
<div class="hl" style="left:1164px;top:154px;width:106px;height:1px"></div>
<div class="hl" style="left:1164px;top:170px;width:106px;height:1px"></div>
<div class="hl" style="left:1164px;top:186px;width:106px;height:1px"></div>
<div class="hl" style="left:1164px;top:202px;width:106px;height:1px"></div>
<div class="hl" style="left:1164px;top:219px;width:106px;height:1px"></div>
<div class="hl" style="left:1164px;top:235px;width:106px;height:1px"></div>
<div style="left:38px;top:105px;width:154px;height:2px;background:#72767f;z-index:2"></div>
<div style="left:294px;top:105px;width:125px;height:2px;background:#72767f;z-index:2"></div>
<div style="left:614px;top:105px;width:500px;height:2px;background:#72767f;z-index:2"></div>
<div style="left:1164px;top:105px;width:106px;height:2px;background:#72767f;z-index:2"></div>
<div class="vl" style="left:88px;top:106px;width:1px;height:546px"></div>
<div class="vl" style="left:140px;top:106px;width:1px;height:546px"></div>
<div class="vl" style="left:191px;top:106px;width:1px;height:546px"></div>
<div class="vl" style="left:294px;top:106px;width:1px;height:546px"></div>
<div class="vl" style="left:418px;top:106px;width:1px;height:546px"></div>
<div class="vl" style="left:614px;top:106px;width:1px;height:546px"></div>
<div class="vl" style="left:798px;top:106px;width:1px;height:546px"></div>
<div class="vl" style="left:901px;top:106px;width:1px;height:546px"></div>
<div class="vl" style="left:1003px;top:106px;width:1px;height:546px"></div>
<div class="vl" style="left:1113px;top:106px;width:1px;height:546px"></div>
<div class="vl" style="left:1164px;top:106px;width:1px;height:130px"></div>
<div class="vl" style="left:1269px;top:106px;width:1px;height:130px"></div>
<div style="left:38px;top:496px;width:1241px;height:17px;background:rgba(14,101,235,0.10);border-top:1px solid #7ba4ee;border-bottom:1px solid #7ba4ee"></div>
<div style="left:38px;top:496px;width:51px;height:17px;border:2px solid #2a6ff0;border-left-width:1px"></div>
<div style="left:0;top:0;width:1279px;height:1px;background:#c4c7c5"></div>
<div style="left:0;top:22px;width:1279px;height:1px;background:#c9d0dc"></div>
<div style="left:0;top:23px;width:1279px;height:1px;background:#c4c4c4"></div>
<div class="ch" style="left:38px;width:50px">A</div>
<div class="cs" style="left:88px"></div>
<div class="ch" style="left:89px;width:51px">B</div>
<div class="cs" style="left:140px"></div>
<div class="ch" style="left:141px;width:50px">C</div>
<div class="cs" style="left:191px"></div>
<div class="ch" style="left:192px;width:50px">D</div>
<div class="cs" style="left:242px"></div>
<div class="ch" style="left:243px;width:51px">E</div>
<div class="cs" style="left:294px"></div>
<div class="ch" style="left:295px;width:123px">F</div>
<div class="cs" style="left:418px"></div>
<div class="ch" style="left:419px;width:195px">G</div>
<div class="cs" style="left:614px"></div>
<div class="ch" style="left:615px;width:183px">H</div>
<div class="cs" style="left:798px"></div>
<div class="ch" style="left:799px;width:102px">I</div>
<div class="cs" style="left:901px"></div>
<div class="ch" style="left:902px;width:101px">J</div>
<div class="cs" style="left:1003px"></div>
<div class="ch" style="left:1004px;width:109px">K</div>
<div class="cs" style="left:1113px"></div>
<div class="ch" style="left:1114px;width:50px">L</div>
<div class="cs" style="left:1164px"></div>
<div class="ch" style="left:1165px;width:104px">M</div>
<div class="cs" style="left:1269px;background:#cbd8ee"></div>
<div class="ch" style="left:1270px;width:102px"></div>
<div class="cs" style="left:1372px"></div>
<div style="left:0;top:1px;width:33px;height:18px;background:#f8f9fa"></div>
<div style="left:33px;top:1px;width:5px;height:22px;background:#c0c0c0"></div>
<div style="left:0;top:19px;width:38px;height:4px;background:#c0c0c0"></div>
<div class="rh" style="top:24px;height:15px;line-height:16px">1</div>
<div class="rs" style="top:39px"></div>
<div class="rh" style="top:40px;height:33px;line-height:34px">2</div>
<div class="rs" style="top:73px"></div>
<div class="rh" style="top:74px;height:15px;line-height:16px">3</div>
<div class="rs" style="top:89px"></div>
<div class="rh" style="top:90px;height:16px;line-height:17px">4</div>
<div class="rs" style="top:106px"></div>
<div class="rh" style="top:107px;height:15px;line-height:16px">5</div>
<div class="rs" style="top:122px"></div>
<div class="rh" style="top:123px;height:15px;line-height:16px">6</div>
<div class="rs" style="top:138px"></div>
<div class="rh" style="top:139px;height:15px;line-height:16px">7</div>
<div class="rs" style="top:154px"></div>
<div class="rh" style="top:155px;height:15px;line-height:16px">8</div>
<div class="rs" style="top:170px"></div>
<div class="rh" style="top:171px;height:15px;line-height:16px">9</div>
<div class="rs" style="top:186px"></div>
<div class="rh" style="top:187px;height:15px;line-height:16px">10</div>
<div class="rs" style="top:202px"></div>
<div class="rh" style="top:203px;height:16px;line-height:17px">11</div>
<div class="rs" style="top:219px"></div>
<div class="rh" style="top:220px;height:15px;line-height:16px">12</div>
<div class="rs" style="top:235px"></div>
<div class="rh" style="top:236px;height:15px;line-height:16px">13</div>
<div class="rs" style="top:251px"></div>
<div class="rh" style="top:252px;height:15px;line-height:16px">14</div>
<div class="rs" style="top:267px"></div>
<div class="rh" style="top:268px;height:15px;line-height:16px">15</div>
<div class="rs" style="top:283px"></div>
<div class="rh" style="top:284px;height:15px;line-height:16px">16</div>
<div class="rs" style="top:299px"></div>
<div class="rh" style="top:300px;height:15px;line-height:16px">17</div>
<div class="rs" style="top:315px"></div>
<div class="rh" style="top:316px;height:16px;line-height:17px">18</div>
<div class="rs" style="top:332px"></div>
<div class="rh" style="top:333px;height:15px;line-height:16px">19</div>
<div class="rs" style="top:348px"></div>
<div class="rh" style="top:349px;height:15px;line-height:16px">20</div>
<div class="rs" style="top:364px"></div>
<div class="rh" style="top:365px;height:15px;line-height:16px">21</div>
<div class="rs" style="top:380px"></div>
<div class="rh" style="top:381px;height:15px;line-height:16px">22</div>
<div class="rs" style="top:396px"></div>
<div class="rh" style="top:397px;height:15px;line-height:16px">23</div>
<div class="rs" style="top:412px"></div>
<div class="rh" style="top:413px;height:15px;line-height:16px">24</div>
<div class="rs" style="top:428px"></div>
<div class="rh" style="top:429px;height:16px;line-height:17px">25</div>
<div class="rs" style="top:445px"></div>
<div class="rh" style="top:446px;height:15px;line-height:16px">26</div>
<div class="rs" style="top:461px"></div>
<div class="rh" style="top:462px;height:15px;line-height:16px">27</div>
<div class="rs" style="top:477px"></div>
<div class="rh" style="top:478px;height:18px;line-height:19px">28</div>
<div class="rs" style="top:496px"></div>
<div class="rh" style="top:497px;height:15px;line-height:16px;background:#0b57d0;color:#fff;font-weight:bold">29</div>
<div class="rh" style="top:513px;height:15px;line-height:16px">30</div>
<div class="rs" style="top:528px"></div>
<div class="rh" style="top:529px;height:15px;line-height:16px">31</div>
<div class="rs" style="top:544px"></div>
<div class="rh" style="top:545px;height:15px;line-height:16px">32</div>
<div class="rs" style="top:560px"></div>
<div class="rh" style="top:561px;height:16px;line-height:17px">33</div>
<div class="rs" style="top:577px"></div>
<div class="rh" style="top:578px;height:15px;line-height:16px">34</div>
<div class="rs" style="top:593px"></div>
<div class="rh" style="top:594px;height:15px;line-height:16px">35</div>
<div class="rs" style="top:609px"></div>
<div class="rh" style="top:610px;height:15px;line-height:16px">36</div>
<div class="rs" style="top:625px"></div>
<div class="rh" style="top:626px;height:15px;line-height:16px">37</div>
<div class="rs" style="top:641px"></div>
<div class="rh" style="top:642px;height:16px;line-height:17px">38</div>
<div class="rs" style="top:658px"></div>
<div style="left:37px;top:23px;width:1px;height:629px;background:#c0c0c0"></div>
</div></body></html>
